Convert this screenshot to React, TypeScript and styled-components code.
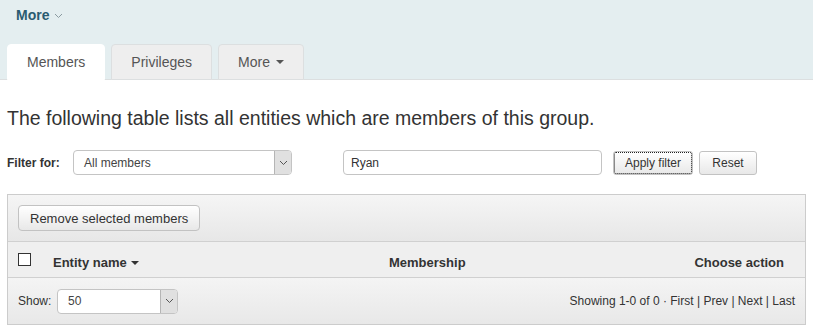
import React from 'react'
import styled, { createGlobalStyle } from 'styled-components'

const GlobalStyle = createGlobalStyle`
  html, body {
    margin: 0;
    padding: 0;
    background: #fff;
    font-family: 'Liberation Sans', Arial, sans-serif;
    color: #333;
  }
  * { box-sizing: border-box; }
`

const Header = styled.div`
  background: #e4eef0;
  padding-top: 7px;
`

const TopLink = styled.div`
  display: flex;
  align-items: center;
  gap: 5px;
  padding-left: 16px;
  height: 16px;
  font-size: 14px;
  font-weight: bold;
  color: #2a5b70;
  svg { margin-top: 1px; }
`

const TabBar = styled.ul`
  list-style: none;
  margin: 21px 0 0;
  padding: 0 0 0 7px;
  display: flex;
  gap: 6px;
  border-bottom: 1px solid #dcdfe0;
`

const Tab = styled.li<{ $active?: boolean }>`
  height: 36px;
  margin-bottom: -1px;
  padding: 0 19px;
  display: flex;
  align-items: center;
  gap: 6px;
  font-size: 14px;
  color: #555;
  background: ${p => (p.$active ? '#fff' : '#eee')};
  border: 1px solid ${p => (p.$active ? '#fff' : '#dcdfe0')};
  border-bottom-color: ${p => (p.$active ? '#fff' : '#dcdfe0')};
  border-radius: 4px 4px 0 0;
`

const Caret = styled.span`
  width: 0;
  height: 0;
  border-left: 4px solid transparent;
  border-right: 4px solid transparent;
  border-top: 4px solid #555;
`

const Content = styled.div`
  padding: 0 7px 0 7px;
`

const Heading = styled.h2`
  margin: 26px 0 0;
  font-size: 19.5px;
  font-weight: normal;
  line-height: 24px;
  color: #333;
`

const FilterRow = styled.div`
  display: flex;
  align-items: center;
  margin-top: 20px;
  height: 25px;
`

const Label = styled.span<{ $bold?: boolean }>`
  font-size: 12px;
  font-weight: ${p => (p.$bold ? 'bold' : 'normal')};
  color: #333;
`

const Select = styled.div<{ $width: number }>`
  display: flex;
  width: ${p => p.$width}px;
  height: 25px;
  border: 1px solid #c4c4c4;
  border-radius: 4px;
  background: #fff;
  overflow: hidden;
`

const SelectText = styled.span`
  flex: 1;
  display: flex;
  align-items: center;
  padding-left: 10px;
  font-size: 12px;
  color: #444;
`

const SelectArrow = styled.span`
  width: 17px;
  display: flex;
  align-items: center;
  justify-content: center;
  background: #e0e0e0;
  border-left: 1px solid #b5b5b5;
`

const TextInput = styled.div`
  width: 259px;
  height: 25px;
  margin-left: 51px;
  padding-left: 7px;
  display: flex;
  align-items: center;
  border: 1px solid #c4c4c4;
  border-radius: 4px;
  font-size: 12px;
  color: #333;
`

const Button = styled.button<{ $focused?: boolean }>`
  height: 24px;
  padding: 0 11px;
  font-family: 'Liberation Sans', Arial, sans-serif;
  font-size: 12px;
  color: #333;
  border: 1px solid #c2c2c2;
  border-radius: 3px;
  background: linear-gradient(#fff, #e8e8e8);
  outline: ${p => (p.$focused ? '1px dotted #222' : 'none')};
  outline-offset: -2px;
`

const FilterButtons = styled.div`
  display: flex;
  gap: 6px;
  margin-left: 11px;
`

const Panel = styled.div`
  margin-top: 19px;
  width: 799px;
  border: 1px solid #ccc;
  background: #efefef;
`

const Toolbar = styled.div`
  height: 47px;
  padding: 10px 10px 0;
  background: linear-gradient(#f5f5f5, #e7e7e7);
  border-bottom: 1px solid #d0d0d0;
`

const BigButton = styled(Button)`
  height: 26px;
  padding: 0 11px;
  font-size: 13px;
  border-radius: 4px;
`

const HeadRow = styled.div`
  display: grid;
  grid-template-columns: 35px 336px 1fr auto;
  align-items: center;
  height: 36px;
  padding: 6px 21px 0 10px;
  background: #efefef;
  border-bottom: 1px solid #d0d0d0;
  font-size: 13px;
  font-weight: bold;
  color: #333;
`

const Check = styled.span`
  width: 13px;
  height: 13px;
  border: 1px solid #333;
  background: #fff;
  margin-bottom: 6px;
`

const SortCol = styled.span`
  display: flex;
  align-items: center;
  gap: 4px;
`

const FootRow = styled.div`
  display: flex;
  align-items: center;
  height: 46px;
  padding: 0 10px;
  background: linear-gradient(#f4f4f4, #e8e8e8);
`

const Pager = styled.span`
  margin-left: auto;
  font-size: 12px;
  color: #333;
`

const Chevron = ({ color = '#555' }: { color?: string }) => (
  <svg width="9" height="6" viewBox="0 0 9 6">
    <path d="M1 1l3.5 3.5L8 1" fill="none" stroke={color} strokeWidth="1" />
  </svg>
)

export default function App() {
  return (
    <>
      <GlobalStyle />
      <Header>
        <TopLink>
          More <Chevron color="#8a9aa0" />
        </TopLink>
        <TabBar>
          <Tab $active>Members</Tab>
          <Tab>Privileges</Tab>
          <Tab>
            More <Caret />
          </Tab>
        </TabBar>
      </Header>
      <Content>
        <Heading>The following table lists all entities which are members of this group.</Heading>
        <FilterRow>
          <Label $bold style={{ width: 66 }}>Filter for:</Label>
          <Select $width={219}>
            <SelectText>All members</SelectText>
            <SelectArrow><Chevron /></SelectArrow>
          </Select>
          <TextInput>Ryan</TextInput>
          <FilterButtons>
            <Button $focused>Apply filter</Button>
            <Button style={{ width: 58 }}>Reset</Button>
          </FilterButtons>
        </FilterRow>
        <Panel>
          <Toolbar>
            <BigButton>Remove selected members</BigButton>
          </Toolbar>
          <HeadRow>
            <Check />
            <SortCol>
              Entity name <Caret style={{ borderTopColor: '#333' }} />
            </SortCol>
            <span>Membership</span>
            <span>Choose action</span>
          </HeadRow>
          <FootRow>
            <Label style={{ width: 39 }}>Show:</Label>
            <Select $width={121}>
              <SelectText>50</SelectText>
              <SelectArrow><Chevron /></SelectArrow>
            </Select>
            <Pager>Showing 1-0 of 0 · First | Prev | Next | Last</Pager>
          </FootRow>
        </Panel>
      </Content>
    </>
  )
}
